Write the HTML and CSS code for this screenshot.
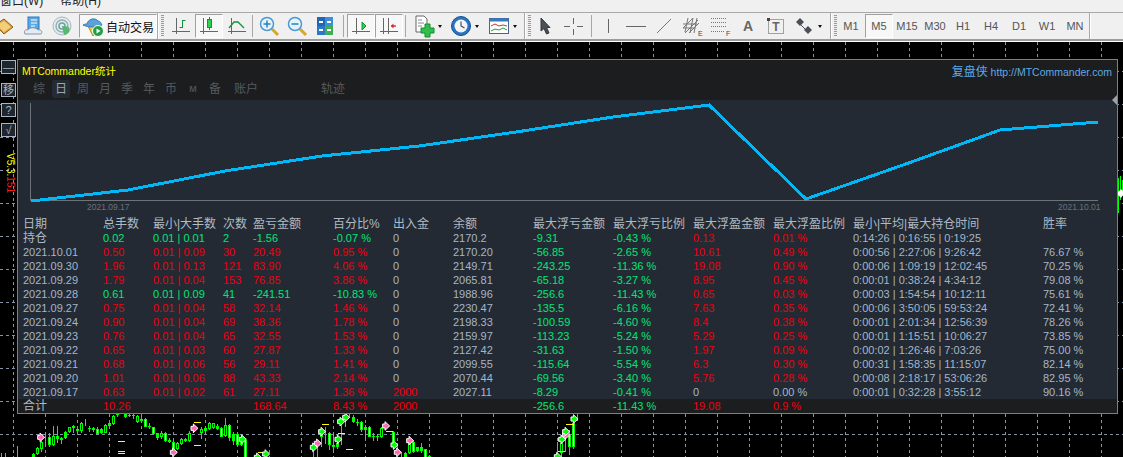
FILE: index.html
```html
<!DOCTYPE html>
<html lang="zh">
<head>
<meta charset="utf-8">
<title>MTCommander统计</title>
<link rel="stylesheet" href="styles.css">
</head>
<body>
<div class="app">
  <div class="menu"><span class="menu-item first">窗口(W)</span><span class="menu-item">帮助(H)</span></div>
  <div class="toolbar">
    <div class="ic w29 bleed"><svg width="22" height="22" viewBox="0 0 22 22"><path d="M2 10 11 4l9 8-9 7z" fill="#d9a441" stroke="#8a5d16"/><path d="M4 10l7-4 7 6-7 5z" fill="#f3cf7a"/></svg></div>
    <div class="ic w29"><svg width="22" height="22" viewBox="0 0 22 22"><rect x="6" y="2" width="11" height="12" fill="#58a9e6" stroke="#2d78b8"/><path d="M9 5h6M9 8h6M9 11h4" stroke="#fff"/><path d="M3 19c-2-3 1-5 3-4 1-3 8-3 10 0 3-1 5 2 3 4z" fill="#e6ebf1" stroke="#8394a8"/></svg></div>
    <div class="ic w29"><svg width="22" height="22" viewBox="0 0 22 22"><circle cx="11" cy="11" r="9" fill="#e3ecec" stroke="#a4b8bd"/><circle cx="11" cy="11" r="6" fill="none" stroke="#96b0b8" stroke-width="1.500"/><circle cx="11" cy="11" r="3" fill="none" stroke="#6f9fac" stroke-width="1.500"/><path d="M11 11c6 0 9 1 7 6-1 2-4 3-5 3z" fill="#58b770"/></svg></div>
    <div class="auto"><svg width="22" height="22" viewBox="0 0 22 22"><path d="M6 11l5 10 6-6 1-5z" fill="#e6c84a" stroke="#a98a1e"/><path d="M1 10c2-1 3-1 4-1 1-5 8-7 11-3 2 0 3 2 4 4-5 2-13 3-19 0z" fill="#5aa3da" stroke="#3a7cb0"/><circle cx="16" cy="16" r="5.500" fill="#1fa045" stroke="#fff"/><path d="M14.500 13.500v5l4-2.500z" fill="#fff"/></svg><span class="auto-label">自动交易</span></div>
    <div class="bar-end"></div><div class="grip gap3"></div>
    <div class="ic"><svg width="22" height="22" viewBox="0 0 22 22"><path class="axis" d="M6.500 3v16M2 16.500h18"/><path d="M12.500 13V5M12.500 5.500h3M12.500 12.500h-3" stroke="#14913a" fill="none"/></svg></div>
    <div class="ic pressed"><svg width="22" height="22" viewBox="0 0 22 22"><path class="axis" d="M5.500 3v16M2 16.500h18"/><path d="M11.500 2v13" stroke="#14913a"/><rect x="9.500" y="4.500" width="4" height="8" fill="#2fd04f" stroke="#14913a"/></svg></div>
    <div class="ic"><svg width="22" height="22" viewBox="0 0 22 22"><path class="axis" d="M5.500 3v16M2 16.500h18"/><path d="M3 13l5-6h4l6 6" fill="none" stroke="#14913a" stroke-width="1.300"/></svg></div>
    <div class="sep"></div>
    <div class="ic"><svg width="24" height="24" viewBox="0 0 24 24"><path d="M15 15l6 6" stroke="#d5a82b" stroke-width="3"/><circle cx="10" cy="10" r="6.500" fill="#e2f3fc" stroke="#4c9ad2" stroke-width="1.500"/><path d="M6.500 10h7M10 6.500v7" stroke="#2a7fbc" stroke-width="1.500"/></svg></div>
    <div class="ic"><svg width="24" height="24" viewBox="0 0 24 24"><path d="M15 15l6 6" stroke="#d5a82b" stroke-width="3"/><circle cx="10" cy="10" r="6.500" fill="#e2f3fc" stroke="#4c9ad2" stroke-width="1.500"/><path d="M6.500 10h7" stroke="#2a7fbc" stroke-width="1.500"/></svg></div>
    <div class="ic"><svg width="16" height="18" viewBox="0 0 16 18"><rect width="8" height="9" fill="#1f66b5"/><rect x="8" width="8" height="9" fill="#3b8fd8"/><rect y="9" width="8" height="9" fill="#2a78c8"/><rect x="8" y="9" width="8" height="9" fill="#3fae55"/><path d="M2 5h4M10 5h4M2 13h4M10 13h4" stroke="#fff" stroke-width="2"/></svg></div>
    <div class="sep wide"></div>
    <div class="ic pressed"><svg width="22" height="22" viewBox="0 0 22 22"><path class="axis" d="M6.500 3v16M2 16.500h18"/><path d="M12 7l4 4-4 4z" fill="#2fd04f" stroke="#14913a"/></svg></div>
    <div class="ic pressed"><svg width="22" height="22" viewBox="0 0 22 22"><path class="axis" d="M5.500 3v16M2 16.500h18M10.500 3v16"/><path d="M13 11h5" stroke="#c22" stroke-width="1.300"/><path d="M15.500 8.500l-2.500 2.500 2.500 2.500z" fill="#c22"/></svg></div>
    <div class="sep mid"></div>
    <div class="ic"><svg width="24" height="24" viewBox="0 0 24 24"><path d="M4 2h8l3 3v13H4z" fill="#fff" stroke="#666"/><path d="M6 6h4M6 9h6M6 12h4" stroke="#888"/><path d="M13 10h5v4h4v5h-4v4h-5v-4H9v-5h4z" fill="#2fbf4a" stroke="#178a30"/></svg></div>
    <div class="caret"></div>
    <div class="ic m5"><svg width="22" height="22" viewBox="0 0 22 22"><circle cx="11" cy="11" r="9.500" fill="#2a74c0" stroke="#14508f"/><circle cx="11" cy="11" r="6.500" fill="#f2f6fa"/><path d="M11 6.500V11l3.500 2" fill="none" stroke="#444" stroke-width="1.100"/></svg></div>
    <div class="caret"></div>
    <div class="ic m6"><svg width="22" height="20" viewBox="0 0 22 20"><rect x="1.500" y="2.500" width="19" height="15" fill="#fff" stroke="#48648c"/><rect x="1.500" y="2.500" width="19" height="3" fill="#3a78bd"/><path d="M3 10l4-2 4 2 4-1 4 1" fill="none" stroke="#c0392b"/><path d="M3 15l4-2 4 1 4-2 4 2" fill="none" stroke="#27a13c"/></svg></div>
    <div class="caret"></div>
    <div class="bar-end m7"></div><div class="grip"></div>
    <div class="ic"><svg width="18" height="22" viewBox="0 0 18 22"><path d="M5 3v13l3-2.500 2.500 5.500 2.500-1-2.500-5.500H14z" fill="#4a5056" stroke="#33373b"/></svg></div>
    <div class="ic"><svg width="22" height="22" viewBox="0 0 22 22"><path class="axis" d="M11.500 3v6M11.500 14v6M2 11.500h6M15 11.500h6"/></svg></div>
    <div class="sep gap-tools"></div>
    <div class="ic"><svg width="22" height="22" viewBox="0 0 22 22"><path class="axis" d="M11.500 4v14"/></svg></div>
    <div class="ic"><svg width="22" height="22" viewBox="0 0 22 22"><path class="axis" d="M1 11.500h20"/></svg></div>
    <div class="ic"><svg width="22" height="22" viewBox="0 0 22 22"><path d="M4 18 18 4" stroke="#777" fill="none"/></svg></div>
    <div class="ic"><svg width="24" height="24" viewBox="0 0 24 24"><path d="M3 14 13 4M5 19 18 6M9 19 19 9M3 10h14M3 14h12M8 4l-3 14M13 4 10 19M17 4l-3 15" stroke="#777" fill="none"/><text class="ic-sub" x="18" y="22">E</text></svg></div>
    <div class="ic"><svg width="24" height="24" viewBox="0 0 24 24"><path d="M3 4.500h16M3 8.500h16M3 12.500h16M3 17.500h13" stroke="#777" stroke-dasharray="1 1"/><text class="ic-sub" x="18" y="22">F</text></svg></div>
    <div class="ic"><span class="ic-a">A</span></div>
    <div class="ic"><svg width="22" height="22" viewBox="0 0 22 22"><rect x="3.500" y="4.500" width="15" height="14" fill="none" stroke="#555" stroke-dasharray="1 1"/><rect x="2" y="3" width="3" height="3" fill="#444"/><text class="ic-t" x="11" y="16">T</text></svg></div>
    <div class="ic"><svg width="22" height="22" viewBox="0 0 22 22"><path d="M7 3l4 4-4 4-4-4z" fill="#4a5056"/><path d="M15 11l4 4-4 4-4-4z" fill="#4a5056"/><path d="M7 9l8 8" stroke="#4a5056"/></svg></div>
    <div class="caret"></div>
    <div class="bar-end m8"></div><div class="grip"></div>
    <div class="ic tf">M1</div>
    <div class="ic tf pressed">M5</div>
    <div class="ic tf">M15</div>
    <div class="ic tf">M30</div>
    <div class="ic tf">H1</div>
    <div class="ic tf">H4</div>
    <div class="ic tf">D1</div>
    <div class="ic tf">W1</div>
    <div class="ic tf">MN</div>
    <div class="bar-end"></div>
  </div>
  <div class="chart">
    <svg class="canvas" width="1123" height="415" viewBox="0 42 1123 415">
      <defs>
        <pattern id="gv" x="13" y="42" width="32" height="6" patternUnits="userSpaceOnUse"><path d="M.5 0v3" stroke="#8494a4"/></pattern>
        <pattern id="gh" x="0" y="38" width="6" height="33" patternUnits="userSpaceOnUse"><path d="M0 .5h3" stroke="#8494a4"/></pattern>
        <path id="pk" d="M-12-6h7v-7l14 13-14 13v-7h-7z" fill="#ff69b4" stroke="#fff" stroke-width="3"/>
        <path id="gr" d="M-12-6h7v-7l14 13-14 13v-7h-7z" fill="#00ff00" stroke="#fff" stroke-width="3"/>
      </defs>
      <rect y="42" width="1123" height="415" fill="url(#gv)"/>
      <rect y="42" width="1123" height="415" fill="url(#gh)"/>
      <g transform="translate(0 410) scale(.33333)" shape-rendering="crispEdges">
        <path d="M4 128V141M16 128V141M52 108V141M100 130V141M112 112V135M124 92V125M136 70V110M148 68V112M160 48V108M172 48V100M184 82V102M196 62V88M208 50V70M220 45V70M232 50V68M244 35V70M256 28V48M268 48V65M280 50V65M292 52V75M304 55V72M316 42V70M328 32V48M340 15V45M352 8V20M376 8V25M388 10V22M400 10V28M412 15V38M424 22V38M436 25V52M448 40V58M460 50V75M472 68V90M484 62V88M496 65V95M508 85V100M520 92V128M532 95V120M544 84V105M556 84V95M568 64V95M580 44V70M604 52V88M616 48V68M628 36V60M640 38V58M652 42V60M664 52V82M676 25V82M688 42V92M700 65V105M712 68V108M724 85V108M736 85V141M940 100V141M952 90V141M964 60V110M976 50V102M988 65V120M1000 72V125M1012 95V118M1024 40V105M1036 15V50M1048 10V25M1060 15V38M1072 28V48M1084 32V65M1096 45V85M1108 48V82M1120 70V92M1132 72V92M1144 50V85M1156 35V60M1180 62V105M1192 100V125M1204 125V141M1216 125V141M1228 95V132M1240 92V128M1252 110V125M1264 100V130M1276 116V141M1288 136V141M1672 95V141M1684 100V141M1696 85V125M1708 60V135M1720 38V118M1732 10V32" stroke="#00ff00" stroke-width="3" fill="none"/>
        <path d="M100 132V141M112 115V132M124 95V118M148 82V105M160 78V105M172 78V88M184 85V89M196 65V85M208 52V67M220 48V53M232 57V62M244 40V62M268 55V58M280 55V59M292 56V72M304 58V68M316 45V68M328 40V47M340 18V42M352 12V16M376 10V22M388 14V19M400 14V18M412 18V36M424 28V32M436 28V50M448 48V52M460 52V72M472 70V84M484 68V82M496 70V92M508 90V96M520 97V125M532 100V116M544 88V102M556 86V92M568 68V92M604 58V68M616 55V62M628 40V58M640 40V55M652 48V56M664 55V80M676 46V78M688 46V84M700 72V92M712 72V105M724 90V105M736 90V141M964 62V80M988 68V105M1000 105V110M1012 100V112M1060 22V35M1072 35V38M1084 35V60M1096 52V60M1108 50V80M1120 78V82M1132 78V82M1144 55V80M1180 65V100M1216 128V141M1228 100V130M1240 95V125M1252 112V122M1264 112V122M1276 118V141M1288 138V141M1684 100V128M1708 75V110M1720 40V112" stroke="#00ff00" stroke-width="9" fill="none"/>
        <path d="M148 85V102M292 59V69M436 31V47M460 55V69M496 73V89M520 100V122M664 58V77M688 49V81M712 75V102M736 93V141M988 71V102M1084 38V57M1108 53V77M1180 68V97M1240 98V122M1276 121V141M1708 78V107M1720 43V109" stroke="#ffffff" stroke-width="3" fill="none"/>
        <path d="M112 118V129M124 98V115M160 81V102M208 55V64M244 43V59M316 48V65M340 21V39M412 21V33M484 71V79M532 103V113M544 91V99M568 71V89M604 61V65M628 43V55M640 43V52M676 49V75M1144 58V77M1228 103V127M1684 103V125" stroke="#000" stroke-width="3" fill="none"/>
        <path d="M354 94h21M354 124h21M354 132h21M582 37h21M582 108h21M774 127h21M966 45h21M1014 70h21M1038 118h21M1158 66h21M1674 125h21M1698 45h21" stroke="#ffff00" stroke-width="3" fill="none"/>
        <g shape-rendering="auto">
          <use href="#pk" x="125" y="82"/><use href="#pk" x="523" y="127"/><use href="#pk" x="585" y="55"/><use href="#pk" x="955" y="100"/><use href="#pk" x="1160" y="48"/><use href="#pk" x="1195" y="127"/><use href="#pk" x="1232" y="92"/><use href="#pk" x="1700" y="75"/>
          <use href="#gr" x="730" y="88"/><use href="#gr" x="775" y="142"/><use href="#gr" x="800" y="132"/><use href="#gr" x="968" y="65"/><use href="#gr" x="943" y="112"/><use href="#gr" x="1040" y="22"/><use href="#gr" x="1025" y="35"/><use href="#gr" x="1017" y="88"/><use href="#gr" x="1185" y="105"/><use href="#gr" x="1688" y="88"/><use href="#gr" x="1700" y="65"/><use href="#gr" x="1725" y="27"/><use href="#gr" x="1675" y="140"/>
        </g>
      </g>
      <path d="M1118.500 178v35" stroke="#00ff00"/>
      <path d="M1120.500 176v24M1122.500 180v16" stroke="#00ff00"/>
      <path d="M1118 192l3-3 2 2v4l-2 3-3-3z" fill="#fff"/>
    </svg>

    <div class="side-btn btn-a">—</div>
    <div class="side-btn btn-b">移</div>
    <div class="side-btn btn-c">?</div>
    <div class="side-btn btn-d">√</div>
    <div class="version"><span class="v-y">V5.3.</span><span class="v-r">151</span></div>

    <div class="panel">
      <div class="title-row"><span class="title">MTCommander统计</span><span class="brand"><span class="brand-cn">复盘侠</span> http://MTCommander.com</span></div>
      <div class="tabs">
        <span class="tab">综</span><span class="tab active">日</span><span class="tab">周</span><span class="tab">月</span><span class="tab">季</span><span class="tab">年</span><span class="tab">币</span><span class="tab small">M</span><span class="tab">备</span><span class="tab two">账户</span><span class="tab two far">轨迹</span>
      </div>
      <div class="plot">
        <svg width="1099" height="117" viewBox="18 100 1099 117">
          <path d="M30.500 103V200.500H1098" fill="none" stroke="#6c737b"/>
          <path d="M31 201 128 190 225 171 322 156 419 146 516 132 613 117 709 105 806 199 903 165 1000 130 1098 122" fill="none" stroke="#00b8f8" stroke-width="3" shape-rendering="crispEdges"/>
          <text class="plot-date" x="87" y="210">2021.09.17</text>
          <text class="plot-date" x="1058" y="210">2021.10.01</text>
        </svg>
        <span class="grab"></span>
      </div>
      <table class="stats">
        <colgroup><col class="c85"><col class="c50"><col class="c70"><col class="c30"><col class="c80"><col class="c60"><col class="c60"><col class="c80"><col class="c80"><col class="c80"><col class="c80"><col class="c80"><col class="c190"><col class="c74"></colgroup>
        <tbody>
        <tr class="head"><td>日期</td><td>总手数</td><td>最小|大手数</td><td>次数</td><td>盈亏金额</td><td>百分比%</td><td>出入金</td><td>余额</td><td>最大浮亏金额</td><td>最大浮亏比例</td><td>最大浮盈金额</td><td>最大浮盈比例</td><td>最小|平均|最大持仓时间</td><td>胜率</td></tr>
        <tr class="loss"><td class="cn">持仓</td><td>0.02</td><td>0.01 | 0.01</td><td>2</td><td>-1.56</td><td>-0.07 %</td><td>0</td><td>2170.2</td><td>-9.31</td><td>-0.43 %</td><td>0.13</td><td>0.01 %</td><td>0:14:26 | 0:16:55 | 0:19:25</td><td></td></tr>
        <tr class="gain"><td>2021.10.01</td><td>0.50</td><td>0.01 | 0.09</td><td>30</td><td>20.49</td><td>0.95 %</td><td>0</td><td>2170.20</td><td>-56.85</td><td>-2.65 %</td><td>10.61</td><td>0.49 %</td><td>0:00:56 | 2:27:06 | 9:26:42</td><td>76.67 %</td></tr>
        <tr class="gain"><td>2021.09.30</td><td>1.96</td><td>0.01 | 0.13</td><td>121</td><td>83.90</td><td>4.06 %</td><td>0</td><td>2149.71</td><td>-243.25</td><td>-11.36 %</td><td>19.08</td><td>0.90 %</td><td>0:00:06 | 1:09:19 | 12:02:45</td><td>70.25 %</td></tr>
        <tr class="gain"><td>2021.09.29</td><td>1.79</td><td>0.01 | 0.04</td><td>153</td><td>76.85</td><td>3.86 %</td><td>0</td><td>2065.81</td><td>-65.18</td><td>-3.27 %</td><td>8.95</td><td>0.45 %</td><td>0:00:01 | 0:38:24 | 4:34:12</td><td>79.08 %</td></tr>
        <tr class="loss"><td>2021.09.28</td><td>0.61</td><td>0.01 | 0.09</td><td>41</td><td>-241.51</td><td>-10.83 %</td><td>0</td><td>1988.96</td><td>-256.6</td><td>-11.43 %</td><td>0.65</td><td>0.03 %</td><td>0:00:03 | 1:54:54 | 10:12:11</td><td>75.61 %</td></tr>
        <tr class="gain"><td>2021.09.27</td><td>0.75</td><td>0.01 | 0.04</td><td>58</td><td>32.14</td><td>1.46 %</td><td>0</td><td>2230.47</td><td>-135.5</td><td>-6.16 %</td><td>7.63</td><td>0.35 %</td><td>0:00:06 | 3:50:05 | 59:53:24</td><td>72.41 %</td></tr>
        <tr class="gain"><td>2021.09.24</td><td>0.90</td><td>0.01 | 0.04</td><td>69</td><td>38.36</td><td>1.78 %</td><td>0</td><td>2198.33</td><td>-100.59</td><td>-4.60 %</td><td>8.4</td><td>0.38 %</td><td>0:00:01 | 2:01:34 | 12:56:39</td><td>78.26 %</td></tr>
        <tr class="gain"><td>2021.09.23</td><td>0.76</td><td>0.01 | 0.04</td><td>65</td><td>32.55</td><td>1.53 %</td><td>0</td><td>2159.97</td><td>-113.23</td><td>-5.24 %</td><td>5.29</td><td>0.25 %</td><td>0:00:01 | 1:15:51 | 10:06:27</td><td>73.85 %</td></tr>
        <tr class="gain"><td>2021.09.22</td><td>0.65</td><td>0.01 | 0.03</td><td>60</td><td>27.87</td><td>1.33 %</td><td>0</td><td>2127.42</td><td>-31.63</td><td>-1.50 %</td><td>1.97</td><td>0.09 %</td><td>0:00:02 | 1:26:46 | 7:03:26</td><td>75.00 %</td></tr>
        <tr class="gain"><td>2021.09.21</td><td>0.68</td><td>0.01 | 0.06</td><td>56</td><td>29.11</td><td>1.41 %</td><td>0</td><td>2099.55</td><td>-115.64</td><td>-5.54 %</td><td>6.3</td><td>0.30 %</td><td>0:00:31 | 1:58:35 | 11:15:07</td><td>82.14 %</td></tr>
        <tr class="gain"><td>2021.09.20</td><td>1.01</td><td>0.01 | 0.06</td><td>88</td><td>43.33</td><td>2.14 %</td><td>0</td><td>2070.44</td><td>-69.56</td><td>-3.40 %</td><td>5.76</td><td>0.28 %</td><td>0:00:08 | 2:18:17 | 53:06:26</td><td>82.95 %</td></tr>
        <tr class="gain"><td>2021.09.17</td><td>0.63</td><td>0.01 | 0.02</td><td>61</td><td>27.11</td><td>1.36 %</td><td class="red">2000</td><td>2027.11</td><td>-8.29</td><td>-0.41 %</td><td class="neutral">0</td><td class="neutral">0.00 %</td><td>0:00:01 | 0:32:28 | 3:55:12</td><td>90.16 %</td></tr>
        <tr class="total gain"><td class="cn">合计</td><td>10.26</td><td></td><td></td><td>168.64</td><td>8.43 %</td><td class="red">2000</td><td></td><td>-256.6</td><td>-11.43 %</td><td>19.08</td><td>0.9 %</td><td></td><td></td></tr>
        </tbody>
      </table>
    </div>
  </div>
</div>
</body>
</html>
```

FILE: styles.css
```css
* { box-sizing: border-box; }
html, body { margin: 0; padding: 0; background: #000; }
body { font-family: "Liberation Sans", "Noto Sans CJK SC", sans-serif; }
svg { display: block; }
.app { width: 1123px; height: 457px; display: flex; flex-direction: column; overflow: hidden; }

.menu { height: 12px; background: #f0f0f0; display: flex; overflow: hidden; flex: none; }
.menu-item { font-size: 12px; line-height: 12px; margin: -5px 0 0 17px; color: #222; white-space: nowrap; }
.menu-item.first { margin-left: 0; }

.toolbar { height: 29px; flex: none; display: flex; align-items: center; background: #f0f0f0; border-top: 1px solid #a8a8a8; border-bottom: 2px solid #9c9c9c; }
.ic { width: 28px; height: 24px; flex: none; display: flex; align-items: center; justify-content: center; }
.w29 { width: 29px; }
.bleed { margin-left: -11px; }
.pressed { border: 1px solid; border-color: #a0a0a0 #fff #fff #a0a0a0; background: #f7f7f7; }
.axis { stroke: #666; fill: none; }
.auto { margin-left: 3px; width: 78px; height: 24px; flex: none; display: flex; align-items: center; gap: 2px; padding-left: 2px; border: 1px solid; border-color: #a0a0a0 #fff #fff #a0a0a0; background: #f7f7f7; }
.auto-label { font-size: 12px; color: #111; white-space: nowrap; }
.bar-end { width: 2px; height: 26px; flex: none; border-left: 1px solid #a8a8a8; border-right: 1px solid #fff; }
.grip { width: 3px; height: 22px; margin-left: 2px; flex: none; background: repeating-linear-gradient(to bottom, #9a9a9a 0 1px, transparent 1px 2px); }
.gap3 { margin-right: 3px; }
.sep { width: 1px; height: 22px; flex: none; background: #a8a8a8; margin: 0 2px 0 1px; }
.sep.wide { margin: 0 3px 0 4px; }
.sep.mid { margin: 0 4px 0 2px; }
.sep.gap-tools { margin: 0 2px 0 4px; }
.caret { flex: none; box-sizing: content-box; height: 0; width: 0; border-top: 3px solid #111; border-left: 2.5px solid transparent; border-right: 2.5px solid transparent; }
.m5 { margin-left: 5px; }
.m6 { margin-left: 6px; }
.m7 { margin-left: 7px; }
.m8 { margin-left: 8px; }
.ic-sub { font-size: 7px; fill: #444; }
.ic-a { font-size: 14px; font-weight: 700; color: #666; }
.ic-t { font-size: 12px; font-weight: 700; fill: #666; text-anchor: middle; }
.tf { font-size: 11px; color: #555; }

.chart { position: relative; flex: 1; background: #000; border-top: 1px solid #fff; }
.canvas { position: absolute; left: 0; top: 0; }

.side-btn { position: absolute; left: 1px; width: 15px; height: 14px; background: #20262e; border: 1px solid #a7b6c6; color: #aab6c2; font-size: 11px; line-height: 12px; text-align: center; overflow: hidden; }
.btn-a { top: 18px; }
.btn-b { top: 41px; }
.btn-c { top: 61px; }
.btn-d { top: 81px; }
.version { position: absolute; left: -11px; top: 127px; width: 42px; font-size: 10px; line-height: 10px; transform: rotate(90deg); white-space: nowrap; }
.v-y { color: #ffff00; }
.v-r { color: #ff1a1a; }

.panel { position: absolute; left: 17px; top: 17px; width: 1101px; height: 355px; background: #1c1d1f; border: 1px solid #6f8296; display: flex; flex-direction: column; }
.title-row { height: 20px; flex: none; display: flex; justify-content: space-between; align-items: center; padding: 0 5px 0 4px; font-size: 10.500px; }
.title { color: #ffff00; }
.brand { color: #5ea9e6; font-size: 10.500px; }
.brand-cn { font-size: 12px; }
.tabs { height: 20px; flex: none; display: flex; padding-left: 10px; font-size: 12px; color: #565a5e; }
.tab { width: 22px; height: 18px; line-height: 19px; text-align: center; }
.tab.active { background: #242b33; color: #9aa6b2; width: 18px; margin: 0 2px; border-radius: 2px; }
.tab.small { font-size: 9px; font-weight: 700; color: #4a5058; }
.tab.two { width: 24px; margin-left: 8px; }
.tab.far { margin-left: 63px; }
.plot { height: 117px; flex: none; background: #232a33; position: relative; }
.plot-date { font-size: 8.500px; fill: #68727d; }
.grab { position: absolute; right: 0; top: -5px; border: 5px solid transparent; border-left-width: 0; border-right-color: #9aa2aa; }

.stats { border-collapse: collapse; table-layout: fixed; width: 1099px; flex: none; font-size: 11px; color: #a5b6ca; background: #232a33; }
.c85 { width: 85px; } .c50 { width: 50px; } .c70 { width: 70px; } .c30 { width: 30px; } .c80 { width: 80px; } .c60 { width: 60px; } .c190 { width: 190px; } .c74 { width: 74px; }
.stats td { height: 14px; padding: 1px 0 0; line-height: 13px; white-space: nowrap; overflow: visible; }
.stats td:first-child { padding-left: 5px; }
.head td, .stats .cn { font-size: 12px; color: #b0bac5; }
.gain td:nth-child(n+2):nth-child(-n+6) { color: #ee0010; }
.loss td:nth-child(n+2):nth-child(-n+6) { color: #00e676; }
.stats td:nth-child(9), .stats td:nth-child(10) { color: #00e676; }
.stats td:nth-child(11), .stats td:nth-child(12) { color: #ee0010; }
.head td:nth-child(n) { color: #b0bac5; }
.stats .red { color: #ee0010; }
.stats td.neutral { color: #a5b6ca; }
.total td { background: #1c1d1f; }
```
